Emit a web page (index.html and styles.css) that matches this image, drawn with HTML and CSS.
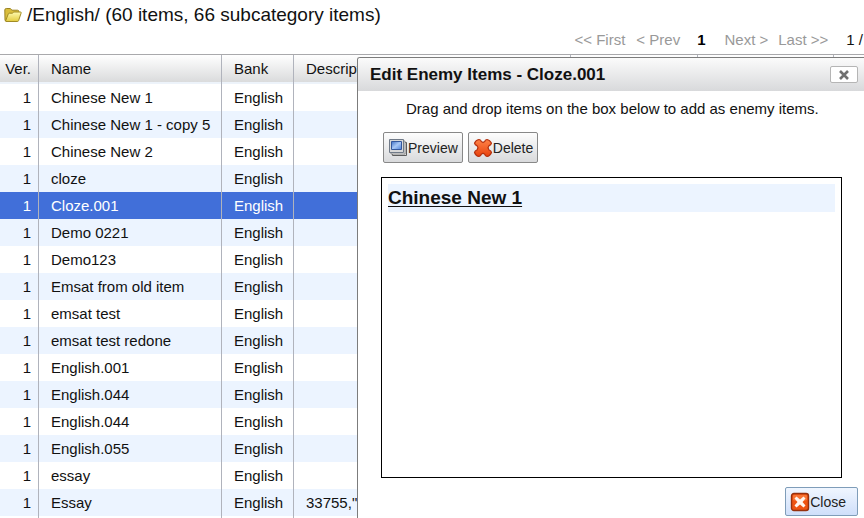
FILE: index.html
```html
<!DOCTYPE html>
<html lang="en">
<head>
<meta charset="utf-8">
<title>Item Bank</title>
<link rel="stylesheet" href="styles.css">
</head>
<body>
<header class="top">
  <h1 class="path">
    <svg class="folder" viewBox="0 0 18 16" aria-hidden="true">
      <defs>
        <linearGradient id="fold" x1="0" y1="0" x2="0" y2="1"><stop offset="0" stop-color="#fffbb0"/><stop offset="1" stop-color="#e3cb3e"/></linearGradient>
      </defs>
      <path d="M1 13.5 .8 3Q.8 1.5 2.3 1.5H6.2L8 3.2H13.5Q14.8 3.2 14.8 4.5V7L4 13.8Z" fill="#d9bd3c" stroke="#9a8322"/>
      <path d="M1.5 14.2 4.3 6.9Q4.6 6.2 5.4 6.2H8.3L9.8 5H16.4Q17.5 5 17.1 6.1L14.6 13.6Q14.4 14.5 13.3 14.5H2Z" fill="url(#fold)" stroke="#a18b25"/>
    </svg>
    <span>/English/ (60 items, 66 subcategory items)</span>
  </h1>
  <nav class="pager" aria-label="Pages">
    <span>&lt;&lt; First</span><span class="prev">&lt; Prev</span><b class="current">1</b><span class="next">Next &gt;</span><span>Last &gt;&gt;</span><span class="total">1 /</span>
  </nav>
</header>
<table class="items">
  <colgroup><col class="c-ver"><col class="c-name"><col class="c-bank"><col class="c-desc"><col class="c-a"><col class="c-b"><col></colgroup>
  <thead><tr><th>Ver.</th><th>Name</th><th>Bank</th><th>Description</th><th></th><th></th><th></th></tr></thead>
  <tbody>
    <tr><td>1</td><td>Chinese New 1</td><td>English</td><td></td><td></td><td></td><td></td></tr>
    <tr><td>1</td><td>Chinese New 1 - copy 5</td><td>English</td><td></td><td></td><td></td><td></td></tr>
    <tr><td>1</td><td>Chinese New 2</td><td>English</td><td></td><td></td><td></td><td></td></tr>
    <tr><td>1</td><td>cloze</td><td>English</td><td></td><td></td><td></td><td></td></tr>
    <tr class="selected"><td>1</td><td>Cloze.001</td><td>English</td><td></td><td></td><td></td><td></td></tr>
    <tr><td>1</td><td>Demo 0221</td><td>English</td><td></td><td></td><td></td><td></td></tr>
    <tr><td>1</td><td>Demo123</td><td>English</td><td></td><td></td><td></td><td></td></tr>
    <tr><td>1</td><td>Emsat from old item</td><td>English</td><td></td><td></td><td></td><td></td></tr>
    <tr><td>1</td><td>emsat test</td><td>English</td><td></td><td></td><td></td><td></td></tr>
    <tr><td>1</td><td>emsat test redone</td><td>English</td><td></td><td></td><td></td><td></td></tr>
    <tr><td>1</td><td>English.001</td><td>English</td><td></td><td></td><td></td><td></td></tr>
    <tr><td>1</td><td>English.044</td><td>English</td><td></td><td></td><td></td><td></td></tr>
    <tr><td>1</td><td>English.044</td><td>English</td><td></td><td></td><td></td><td></td></tr>
    <tr><td>1</td><td>English.055</td><td>English</td><td></td><td></td><td></td><td></td></tr>
    <tr><td>1</td><td>essay</td><td>English</td><td></td><td></td><td></td><td></td></tr>
    <tr><td>1</td><td>Essay</td><td>English</td><td>33755,"C</td><td></td><td></td><td></td></tr>
    <tr><td></td><td></td><td></td><td></td><td></td><td></td><td></td></tr>
  </tbody>
</table>
<section class="dialog" role="dialog" aria-labelledby="dialog-title">
  <div class="titlebar">
    <h2 id="dialog-title">Edit Enemy Items - Cloze.001</h2>
    <button class="dismiss" type="button" aria-label="Close dialog">
      <svg viewBox="0 0 12 12" aria-hidden="true"><path d="M2 2 10 10M10 2 2 10" stroke="#707070" stroke-width="2.6"/></svg>
    </button>
  </div>
  <p class="hint">Drag and drop items on the box below to add as enemy items.</p>
  <div class="tools">
    <button class="btn" type="button">
      <svg class="icon" viewBox="0 0 20 20" aria-hidden="true">
        <defs><linearGradient id="scr" x1="0" y1="0" x2="1" y2="1"><stop offset="0" stop-color="#3f6fc4"/><stop offset=".5" stop-color="#a9c8f5"/><stop offset="1" stop-color="#4c7fd8"/></linearGradient></defs>
        <path d="M4.5 4.5H18.500V17.500H4.500Z" fill="#d8d8d8" stroke="#5c5c5c"/>
        <path d="M3 3H17V16H3Z" fill="#eee" stroke="#8c8c8c"/>
        <path d="M1.500 1.500H15.500V14.500H1.500Z" fill="#d8d8d8" stroke="#707a88"/>
        <path d="M3.500 3.500H13.500V11.500H3.500Z" fill="url(#scr)" stroke="#34579c"/>
      </svg>Preview
    </button>
    <button class="btn" type="button">
      <svg class="icon" viewBox="0 0 20 20" aria-hidden="true">
        <defs><linearGradient id="del" x1="0" y1="0" x2="0" y2="1"><stop offset="0" stop-color="#ff8348"/><stop offset="1" stop-color="#e8410c"/></linearGradient></defs>
        <path d="M6 1.500Q8 1.800 8.300 3.600L10 4.600 11.700 3.600Q12 1.800 14 1.500Q16.800 1.800 18.500 5.200Q18 7.200 16 7.700L15 9.800 16 12Q18 12.500 18.500 14.500Q17 18 14 18.500Q12 18 11.700 16.200L10 15.200 8.300 16.200Q8 18 6 18.500Q2.800 18 1.500 14.500Q2 12.500 4 12L5 9.800 4 7.700Q2 7.200 1.500 5.200Q2.800 1.800 6 1.500Z" fill="url(#del)" stroke="#b5300e" stroke-width="1.200" stroke-linejoin="round"/>
      </svg>Delete
    </button>
  </div>
  <ul class="dropbox">
    <li><a href="#item">Chinese New 1</a></li>
  </ul>
  <div class="foot">
    <button class="btn close" type="button">
      <svg class="icon" viewBox="0 0 20 20" aria-hidden="true">
        <rect x="1.500" y="1.500" width="17" height="17" rx="2.500" fill="#ee5312" stroke="#96300d" stroke-width="1.400"/>
        <path d="M3 4Q3 3 4 3H16Q17 3 17 4V8Q10 11 3 8Z" fill="#ff8b4d" opacity=".6"/>
        <path d="M6.500 4.500 10 7.500 13.500 4.500 15.500 6.500 12.500 10 15.500 13.500 13.500 15.500 10 12.500 6.500 15.500 4.500 13.500 7.500 10 4.500 6.500Z" fill="#fff5ee"/>
      </svg>Close
    </button>
  </div>
</section>
</body>
</html>
```
FILE: styles.css
```css
* { box-sizing: border-box; }
body {
  margin: 0;
  height: 100vh;
  overflow: hidden;
  position: relative;
  background: #fff;
  color: #111;
  font: 15px/18px "Liberation Sans", Arial, sans-serif;
}
.path {
  display: flex;
  align-items: center;
  gap: 5px;
  margin: 0;
  padding: 4px 4px 0;
  font-size: 19px;
  font-weight: normal;
  line-height: 22px;
}
.folder { width: 18px; height: 16px; }
.pager {
  display: flex;
  justify-content: flex-end;
  padding: 5px 1px 5px 0;
  color: #999;
  white-space: nowrap;
}
.prev { margin-left: 11px; }
.current { margin: 0 19px 0 17px; color: #000; }
.next { margin-right: 10px; }
.total { margin-left: 18px; color: #111; }

.items {
  width: 100%;
  table-layout: fixed;
  border-collapse: separate;
  border-spacing: 0;
  border-top: 1px solid #a9a9ac;
}
.c-ver { width: 39px; }
.c-name { width: 183px; }
.c-bank { width: 72px; }
.c-desc { width: 277px; }
.c-a { width: 127px; }
.c-b { width: 136px; }
.items th, .items td {
  padding: 0 12px;
  border-right: 1px solid #b0b3bc;
  font-weight: normal;
  text-align: left;
  white-space: nowrap;
}
.items th:last-child, .items td:last-child { border-right: 0; }
.items th:first-child, .items td:first-child { padding-left: 0; padding-right: 7px; text-align: right; }
.items th {
  height: 29px;
  padding-bottom: 2px;
  background: linear-gradient(#fff, #dadbdc 27px, #edf3fa 27px);
}
.items td { height: 27px; }
.items tbody tr:nth-child(even) { background: #ecf4ff; }
.items tbody .selected { background: #416fd9; color: #fff; }

.dialog {
  position: absolute;
  top: 57px;
  left: 357px;
  right: 0;
  bottom: 0;
  display: flex;
  flex-direction: column;
  border: solid #7c7c7c;
  border-width: 1px 0 0 1px;
  border-radius: 3px 0 0 0;
  background: #fff;
}
.titlebar {
  display: flex;
  align-items: center;
  justify-content: space-between;
  height: 33px;
  padding: 0 6px 0 12px;
  border-radius: 2px 0 0 0;
  background: linear-gradient(#fbfbfb, #d8d9db);
}
.titlebar h2 { margin: 0; font-size: 17px; line-height: 20px; }
.dismiss {
  display: flex;
  align-items: center;
  justify-content: center;
  width: 28px;
  height: 17px;
  padding: 0;
  border: 1px solid #b5b5b5;
  border-radius: 2px;
  background: #fff;
}
.dismiss svg { width: 12px; height: 12px; }
.hint { margin: 9px 0 14px 48px; }
.tools { display: flex; gap: 5px; padding-left: 25px; }
.btn {
  display: flex;
  align-items: center;
  height: 31px;
  padding: 0 4px;
  border: 1px solid #888;
  border-radius: 2px;
  background: linear-gradient(#fdfdfd, #d9dadc);
  color: #222;
  font-family: inherit;
  font-size: 14px;
}
.icon { width: 20px; height: 20px; }
.dropbox {
  flex: 1;
  margin: 14px 22px 9px 23px;
  padding: 6px;
  border: 1px solid #000;
  list-style: none;
}
.dropbox li { background: #ecf4ff; font-size: 19px; font-weight: bold; line-height: 28px; }
.dropbox a { color: #111; text-underline-offset: 2px; text-decoration-thickness: 1px; }
.foot { display: flex; justify-content: flex-end; padding: 0 6px 2px 0; }
.close {
  height: 29px;
  padding: 0 11px 0 4px;
  border-color: #7f9db9;
  background: linear-gradient(#f0f6ff, #cfdffa);
}
```
